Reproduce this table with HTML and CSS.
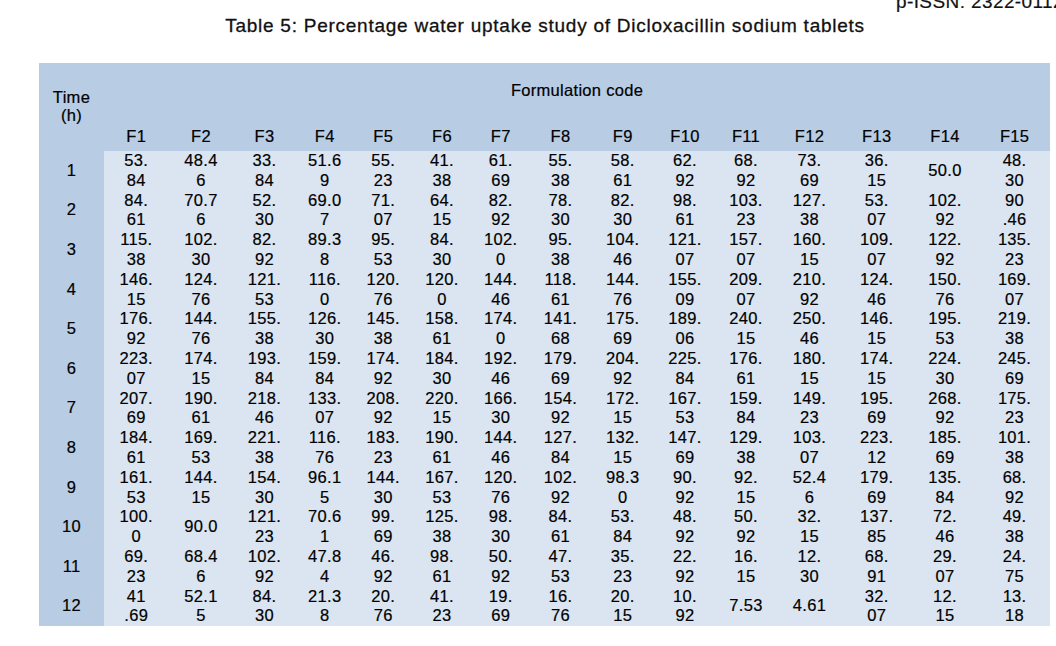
FILE: index.html
```html
<!DOCTYPE html>
<html lang="en">
<head>
<meta charset="utf-8">
<title>Table 5</title>
<link rel="stylesheet" href="styles.css">
</head>
<body>
<div class="page">
  <div class="issn">p-ISSN: 2322-0112</div>
  <h1 class="title">Table 5: Percentage water uptake study of Dicloxacillin sodium tablets</h1>
  <table class="data">
    <colgroup>
      <col class="w-time"><col class="w1"><col class="w2"><col class="w3"><col class="w4"><col class="w5"><col class="w6"><col class="w7"><col class="w8"><col class="w9"><col class="w10"><col class="w11"><col class="w12"><col class="w13"><col class="w14"><col class="w15">
    </colgroup>
    <thead>
      <tr class="h-top">
        <th class="time" rowspan="2">Time<br>(h)</th>
        <th class="code" colspan="15">Formulation code</th>
      </tr>
      <tr class="h-codes">
        <th>F1</th><th>F2</th><th>F3</th><th>F4</th><th>F5</th><th>F6</th><th>F7</th><th>F8</th><th>F9</th><th>F10</th><th>F11</th><th>F12</th><th>F13</th><th>F14</th><th>F15</th>
      </tr>
    </thead>
    <tbody>
      <tr><th>1</th><td>53.<br>84</td><td>48.4<br>6</td><td>33.<br>84</td><td>51.6<br>9</td><td>55.<br>23</td><td>41.<br>38</td><td>61.<br>69</td><td>55.<br>38</td><td>58.<br>61</td><td>62.<br>92</td><td>68.<br>92</td><td>73.<br>69</td><td>36.<br>15</td><td>50.0</td><td>48.<br>30</td></tr>
      <tr><th>2</th><td>84.<br>61</td><td>70.7<br>6</td><td>52.<br>30</td><td>69.0<br>7</td><td>71.<br>07</td><td>64.<br>15</td><td>82.<br>92</td><td>78.<br>30</td><td>82.<br>30</td><td>98.<br>61</td><td>103.<br>23</td><td>127.<br>38</td><td>53.<br>07</td><td>102.<br>92</td><td>90<br>.46</td></tr>
      <tr><th>3</th><td>115.<br>38</td><td>102.<br>30</td><td>82.<br>92</td><td>89.3<br>8</td><td>95.<br>53</td><td>84.<br>30</td><td>102.<br>0</td><td>95.<br>38</td><td>104.<br>46</td><td>121.<br>07</td><td>157.<br>07</td><td>160.<br>15</td><td>109.<br>07</td><td>122.<br>92</td><td>135.<br>23</td></tr>
      <tr><th>4</th><td>146.<br>15</td><td>124.<br>76</td><td>121.<br>53</td><td>116.<br>0</td><td>120.<br>76</td><td>120.<br>0</td><td>144.<br>46</td><td>118.<br>61</td><td>144.<br>76</td><td>155.<br>09</td><td>209.<br>07</td><td>210.<br>92</td><td>124.<br>46</td><td>150.<br>76</td><td>169.<br>07</td></tr>
      <tr><th>5</th><td>176.<br>92</td><td>144.<br>76</td><td>155.<br>38</td><td>126.<br>30</td><td>145.<br>38</td><td>158.<br>61</td><td>174.<br>0</td><td>141.<br>68</td><td>175.<br>69</td><td>189.<br>06</td><td>240.<br>15</td><td>250.<br>46</td><td>146.<br>15</td><td>195.<br>53</td><td>219.<br>38</td></tr>
      <tr><th>6</th><td>223.<br>07</td><td>174.<br>15</td><td>193.<br>84</td><td>159.<br>84</td><td>174.<br>92</td><td>184.<br>30</td><td>192.<br>46</td><td>179.<br>69</td><td>204.<br>92</td><td>225.<br>84</td><td>176.<br>61</td><td>180.<br>15</td><td>174.<br>15</td><td>224.<br>30</td><td>245.<br>69</td></tr>
      <tr><th>7</th><td>207.<br>69</td><td>190.<br>61</td><td>218.<br>46</td><td>133.<br>07</td><td>208.<br>92</td><td>220.<br>15</td><td>166.<br>30</td><td>154.<br>92</td><td>172.<br>15</td><td>167.<br>53</td><td>159.<br>84</td><td>149.<br>23</td><td>195.<br>69</td><td>268.<br>92</td><td>175.<br>23</td></tr>
      <tr><th>8</th><td>184.<br>61</td><td>169.<br>53</td><td>221.<br>38</td><td>116.<br>76</td><td>183.<br>23</td><td>190.<br>61</td><td>144.<br>46</td><td>127.<br>84</td><td>132.<br>15</td><td>147.<br>69</td><td>129.<br>38</td><td>103.<br>07</td><td>223.<br>12</td><td>185.<br>69</td><td>101.<br>38</td></tr>
      <tr><th>9</th><td>161.<br>53</td><td>144.<br>15</td><td>154.<br>30</td><td>96.1<br>5</td><td>144.<br>30</td><td>167.<br>53</td><td>120.<br>76</td><td>102.<br>92</td><td>98.3<br>0</td><td>90.<br>92</td><td>92.<br>15</td><td>52.4<br>6</td><td>179.<br>69</td><td>135.<br>84</td><td>68.<br>92</td></tr>
      <tr><th>10</th><td>100.<br>0</td><td>90.0</td><td>121.<br>23</td><td>70.6<br>1</td><td>99.<br>69</td><td>125.<br>38</td><td>98.<br>30</td><td>84.<br>61</td><td>53.<br>84</td><td>48.<br>92</td><td>50.<br>92</td><td>32.<br>15</td><td>137.<br>85</td><td>72.<br>46</td><td>49.<br>38</td></tr>
      <tr><th>11</th><td>69.<br>23</td><td>68.4<br>6</td><td>102.<br>92</td><td>47.8<br>4</td><td>46.<br>92</td><td>98.<br>61</td><td>50.<br>92</td><td>47.<br>53</td><td>35.<br>23</td><td>22.<br>92</td><td>16.<br>15</td><td>12.<br>30</td><td>68.<br>91</td><td>29.<br>07</td><td>24.<br>75</td></tr>
      <tr><th>12</th><td>41<br>.69</td><td>52.1<br>5</td><td>84.<br>30</td><td>21.3<br>8</td><td>20.<br>76</td><td>41.<br>23</td><td>19.<br>69</td><td>16.<br>76</td><td>20.<br>15</td><td>10.<br>92</td><td>7.53</td><td>4.61</td><td>32.<br>07</td><td>12.<br>15</td><td>13.<br>18</td></tr>
    </tbody>
  </table>
</div>
</body>
</html>
```
FILE: styles.css
```css
html, body {
  margin: 0;
  padding: 0;
  background: #ffffff;
}

.page {
  width: 1056px;
  height: 646px;
  overflow: hidden;
  font-family: "Liberation Sans", Arial, sans-serif;
  color: #000000;
}

.issn {
  margin-top: -8px;
  padding-left: 896px;
  font-size: 19px;
  line-height: 19px;
  white-space: nowrap;
  letter-spacing: 0.4px;
  color: #111111;
  -webkit-text-stroke: 0.2px #111111;
}

.title {
  margin: 5px 0 0 0;
  font-size: 19px;
  line-height: 19px;
  font-weight: normal;
  letter-spacing: 0.75px;
  text-align: center;
  padding-left: 34px;
  color: #111111;
  white-space: nowrap;
  -webkit-text-stroke: 0.3px #111111;
}

.data {
  margin: 28px 0 0 39px;
  width: 1011px;
  border-collapse: collapse;
  border-spacing: 0;
  table-layout: fixed;
  font-size: 16.5px;
  line-height: 19.8px;
  letter-spacing: 0.3px;
  -webkit-text-stroke: 0.2px #000000;
}

.w-time { width: 65px; }
.w1 { width: 64.5px; }
.w2 { width: 65px; }
.w3 { width: 62px; }
.w4 { width: 58.5px; }
.w5 { width: 58.5px; }
.w6 { width: 59px; }
.w7 { width: 58.5px; }
.w8 { width: 61px; }
.w9 { width: 63.5px; }
.w10 { width: 61px; }
.w11 { width: 61px; }
.w12 { width: 66px; }
.w13 { width: 68.5px; }
.w14 { width: 68px; }
.w15 { width: 71px; }

.data th,
.data td {
  padding: 0;
  text-align: center;
  vertical-align: middle;
  font-weight: normal;
}

.data thead th {
  background: #b8cce4;
}

.h-top { height: 58px; }
.h-top .time { line-height: 18.5px; padding-bottom: 2px; }
.h-top .code { padding-bottom: 2px; }
.h-codes { height: 30px; }
.h-codes th { padding-top: 2px; }

.data tbody tr { height: 39.6px; }

.data tbody th {
  background: #b8cce4;
}

.data tbody td {
  background: #dbe5f1;
}
```
